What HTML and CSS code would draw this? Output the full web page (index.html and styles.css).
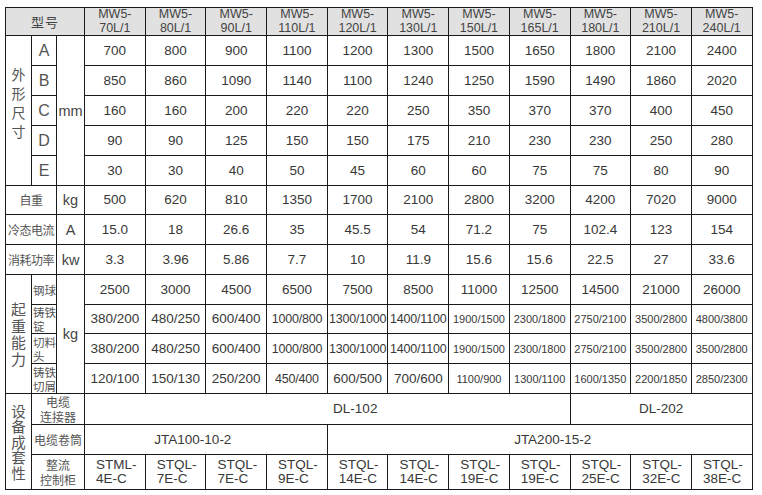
FILE: index.html
```html
<!DOCTYPE html>
<html lang="zh">
<head>
<meta charset="utf-8">
<title>MW5 规格表</title>
<link rel="stylesheet" href="styles.css">
</head>
<body>
<table class="spec">
  <colgroup>
    <col class="c1"><col class="c2"><col class="c3">
    <col class="cd"><col class="cd"><col class="cd"><col class="cd"><col class="cd"><col class="cd">
    <col class="cd"><col class="cd"><col class="cd"><col class="cd"><col class="cd">
  </colgroup>
  <tr class="head">
    <th colspan="3" class="cn-h">型号</th>
    <th>MW5-<br>70L/1</th><th>MW5-<br>80L/1</th><th>MW5-<br>90L/1</th><th>MW5-<br>110L/1</th>
    <th>MW5-<br>120L/1</th><th>MW5-<br>130L/1</th><th>MW5-<br>150L/1</th><th>MW5-<br>165L/1</th>
    <th>MW5-<br>180L/1</th><th>MW5-<br>210L/1</th><th>MW5-<br>240L/1</th>
  </tr>
  <tr>
    <td rowspan="5" class="vert v1"><span>外形尺寸</span></td>
    <td class="letter">A</td>
    <td rowspan="5" class="unit">mm</td>
    <td>700</td><td>800</td><td>900</td><td>1100</td><td>1200</td><td>1300</td><td>1500</td><td>1650</td><td>1800</td><td>2100</td><td>2400</td>
  </tr>
  <tr>
    <td class="letter">B</td>
    <td>850</td><td>860</td><td>1090</td><td>1140</td><td>1100</td><td>1240</td><td>1250</td><td>1590</td><td>1490</td><td>1860</td><td>2020</td>
  </tr>
  <tr>
    <td class="letter">C</td>
    <td>160</td><td>160</td><td>200</td><td>220</td><td>220</td><td>250</td><td>350</td><td>370</td><td>370</td><td>400</td><td>450</td>
  </tr>
  <tr>
    <td class="letter">D</td>
    <td>90</td><td>90</td><td>125</td><td>150</td><td>150</td><td>175</td><td>210</td><td>230</td><td>230</td><td>250</td><td>280</td>
  </tr>
  <tr>
    <td class="letter">E</td>
    <td>30</td><td>30</td><td>40</td><td>50</td><td>45</td><td>60</td><td>60</td><td>75</td><td>75</td><td>80</td><td>90</td>
  </tr>
  <tr class="r29">
    <td colspan="2" class="cn">自重</td>
    <td class="unit">kg</td>
    <td>500</td><td>620</td><td>810</td><td>1350</td><td>1700</td><td>2100</td><td>2800</td><td>3200</td><td>4200</td><td>7020</td><td>9000</td>
  </tr>
  <tr>
    <td colspan="2" class="cn">冷态电流</td>
    <td class="unit">A</td>
    <td>15.0</td><td>18</td><td>26.6</td><td>35</td><td>45.5</td><td>54</td><td>71.2</td><td>75</td><td>102.4</td><td>123</td><td>154</td>
  </tr>
  <tr>
    <td colspan="2" class="cn">消耗功率</td>
    <td class="unit">kw</td>
    <td>3.3</td><td>3.96</td><td>5.86</td><td>7.7</td><td>10</td><td>11.9</td><td>15.6</td><td>15.6</td><td>22.5</td><td>27</td><td>33.6</td>
  </tr>
  <tr>
    <td rowspan="4" class="vert v2"><span>起重能力</span></td>
    <td class="sub">钢球</td>
    <td rowspan="4" class="unit">kg</td>
    <td>2500</td><td>3000</td><td>4500</td><td>6500</td><td>7500</td><td>8500</td><td>11000</td><td>12500</td><td>14500</td><td>21000</td><td>26000</td>
  </tr>
  <tr class="r29">
    <td class="sub">铸铁<br>锭</td>
    <td>380/200</td><td>480/250</td><td>600/400</td><td class="t">1000/800</td><td class="t">1300/1000</td><td class="t">1400/1100</td><td class="s">1900/1500</td><td class="s">2300/1800</td><td class="s">2750/2100</td><td class="s">3500/2800</td><td class="s">4800/3800</td>
  </tr>
  <tr>
    <td class="sub">切料<br>头</td>
    <td>380/200</td><td>480/250</td><td>600/400</td><td class="t">1000/800</td><td class="t">1300/1000</td><td class="t">1400/1100</td><td class="s">1900/1500</td><td class="s">2300/1800</td><td class="s">2750/2100</td><td class="s">3500/2800</td><td class="s">3500/2800</td>
  </tr>
  <tr>
    <td class="sub">铸铁<br>切屑</td>
    <td>120/100</td><td>150/130</td><td>250/200</td><td class="t">450/400</td><td>600/500</td><td>700/600</td><td class="s">1100/900</td><td class="s">1300/1100</td><td class="s">1600/1350</td><td class="s">2200/1850</td><td class="s">2850/2300</td>
  </tr>
  <tr>
    <td rowspan="3" class="vert v3"><span>设备成套性</span></td>
    <td colspan="2" class="cn2">电缆<br>连接器</td>
    <td colspan="8" class="dl1">DL-102</td>
    <td colspan="3">DL-202</td>
  </tr>
  <tr>
    <td colspan="2" class="cn2">电缆卷筒</td>
    <td colspan="4" class="jta1">JTA100-10-2</td>
    <td colspan="7" class="jta2">JTA200-15-2</td>
  </tr>
  <tr class="last">
    <td colspan="2" class="cn2">整流<br>控制柜</td>
    <td class="ctl">STML-<br>4E-C</td><td class="ctl">STQL-<br>7E-C</td><td class="ctl">STQL-<br>7E-C</td><td class="ctl">STQL-<br>9E-C</td>
    <td class="ctl">STQL-<br>14E-C</td><td class="ctl">STQL-<br>14E-C</td><td class="ctl">STQL-<br>19E-C</td><td class="ctl">STQL-<br>19E-C</td>
    <td class="ctl">STQL-<br>25E-C</td><td class="ctl">STQL-<br>32E-C</td><td class="ctl">STQL-<br>38E-C</td>
  </tr>
</table>
</body>
</html>
```

FILE: styles.css
```css
html, body {
  margin: 0;
  padding: 0;
  background: #ffffff;
}

body {
  padding: 7px 0 0 5px;
  font-family: "Liberation Sans", Arial, "Noto Sans CJK SC", sans-serif;
  color: #383838;
}

.spec {
  border-collapse: collapse;
  table-layout: fixed;
  width: 747px;
}

.c1 { width: 26px; }
.c2 { width: 25px; }
.c3 { width: 28px; }
.cd { width: 60.7px; }

.spec th,
.spec td {
  border: 1px solid #1a1a1a;
  padding: 0;
  text-align: center;
  vertical-align: middle;
  font-size: 13.5px;
  line-height: 16px;
  font-weight: normal;
  white-space: nowrap;
  overflow: visible;
}

.spec tr { height: 30px; }
.spec tr.r29 { height: 29px; }
.spec tr.head { height: 28px; }
.spec tr.last { height: 35px; }

.head th {
  background: #e1e1e1;
  font-size: 12.5px;
  line-height: 13.5px;
  color: #444;
}

.head th.cn-h {
  font-family: "Noto Sans CJK SC", sans-serif;
  font-size: 13px;
  line-height: 16px;
  color: #444;
  letter-spacing: 1px;
}

.spec td.letter {
  font-size: 16px;
  color: #555;
}

.spec td.unit {
  font-size: 14.5px;
  color: #444;
}

.spec td.cn {
  font-family: "Noto Sans CJK SC", sans-serif;
  font-size: 12px;
  color: #555;
  letter-spacing: -0.5px;
}

.spec td.cn2 {
  font-family: "Noto Sans CJK SC", sans-serif;
  font-size: 12px;
  line-height: 15px;
  color: #555;
}

.spec td.sub {
  font-family: "Noto Sans CJK SC", sans-serif;
  font-size: 11.5px;
  line-height: 14px;
  color: #555;
  text-align: left;
  padding-left: 1px;
  overflow: hidden;
}

.spec td.vert {
  font-family: "Noto Sans CJK SC", sans-serif;
  white-space: normal;
  word-break: break-all;
  color: #555;
}

.vert span {
  display: block;
  width: 1em;
  margin: 0 auto;
}

.spec td.v1 { font-size: 14px; line-height: 19px; padding-bottom: 16px; }
.spec td.v2 { font-size: 15px; line-height: 16.5px; }
.spec td.v3 { font-size: 14.5px; line-height: 15.5px; }

.spec td.t {
  font-size: 12.5px;
  letter-spacing: -0.2px;
}

.spec td.s {
  font-size: 11px;
}

.spec td.dl1 { padding-left: 56px; }
.spec td.jta1 { padding-right: 26px; }
.spec td.jta2 { padding-left: 26px; }

.spec td.ctl {
  text-align: left;
  padding-left: 11px;
  font-size: 13.5px;
  line-height: 14px;
}
```
